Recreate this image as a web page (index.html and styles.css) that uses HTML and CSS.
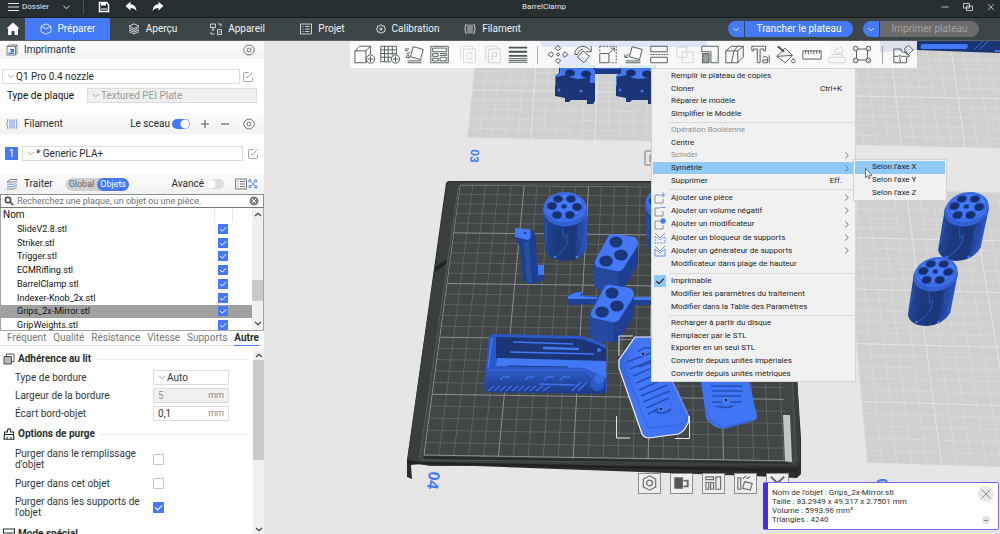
FILE: index.html
```html
<!DOCTYPE html>
<html lang="fr">
<head>
<meta charset="utf-8">
<title>BarrelClamp</title>
<link rel="stylesheet" href="styles.css">
</head>
<body>
<svg class="defs" aria-hidden="true">
  <symbol id="chev" viewBox="0 0 8 5"><path d="M1 1l3 2.6L7 1"/></symbol>
  <symbol id="gear" viewBox="0 0 12 12"><path d="M3.800 1.200h4.400L9 2.600l1.200.6L11.500 6l-1.300 2.800-1.200.6-.8 1.400H3.800L3 9.400l-1.200-.6L.5 6l1.300-2.800L3 2.600z"/><circle cx="6" cy="6" r="1.900"/></symbol>
  <symbol id="edit" viewBox="0 0 12 12"><path d="M6.500 1.500H3Q1.500 1.500 1.500 3v6Q1.500 10.500 3 10.500h6q1.500 0 1.500-1.500V6.500M5 7l5.500-5.500M5 7l.3-1.600"/></symbol>
  <symbol id="spool" viewBox="0 0 12 12"><path d="M2 1Q-.2 6 2 11M10 1q2.200 5 0 10"/><path class="tint" d="M4 1.500v9M6 1.500v9M8 1.500v9"/></symbol>
  <symbol id="tick" viewBox="0 0 10 10"><path d="M2 5l2.200 2.200L8.300 3"/></symbol>
</svg>

<header class="titlebar">
  <button class="file"><svg class="ic burger" viewBox="0 0 12 10"><path d="M0 1.500h11M0 5h11M0 8.500h11"/></svg>Dossier<svg class="ic file-chev"><use href="#chev"/></svg></button>
  <button class="tool" aria-label="Enregistrer"><svg class="ic s12" viewBox="0 0 12 12"><path class="bold" d="M1.500 1.500h7l2 2v7h-9z"/><path class="fill" d="M3 1h5v3.500H3zM3 7.500h6v1H3z"/></svg></button>
  <button class="tool" aria-label="Annuler"><svg class="ic s12" viewBox="0 0 12 12"><path class="fill" d="M.5 5L5.500.8v2.500q5.500.2 6 6.700-2-3-6-3v2.500z"/></svg></button>
  <button class="tool" aria-label="Rétablir"><svg class="ic s12" viewBox="0 0 12 12"><path class="fill" d="M11.500 5L6.500.8v2.500Q1 3.500.5 10q2-3 6-3v2.500z"/></svg></button>
  <h1>BarrelClamp</h1>
  <div class="window">
    <button aria-label="Réduire"><svg class="ic s10" viewBox="0 0 10 10"><path d="M1.500 5h7"/></svg></button>
    <button aria-label="Restaurer"><svg class="ic s10" viewBox="0 0 10 10"><path d="M.5 1.500h6v4.500h-6zM3.500 4h6v4.500h-6z"/></svg></button>
    <button aria-label="Fermer"><svg class="ic s10" viewBox="0 0 10 10"><path d="M2 2.200l6 6M8 2.200l-6 6"/></svg></button>
  </div>
</header>

<nav class="tabs">
  <button class="home" aria-label="Accueil"><svg class="ic s14" viewBox="0 0 14 14"><path class="fill" d="M7 .5L.5 6.500H2V13h3.500V9h3v4H12V6.500h1.500z"/></svg></button>
  <button class="tab active"><svg class="ic s12" viewBox="0 0 12 12"><path d="M6 .8l5 2.500v5.400l-5 2.500-5-2.500V3.300zM1 3.300l5 2.600 5-2.600"/></svg>Préparer</button>
  <button class="tab"><svg class="ic s12" viewBox="0 0 12 12"><path d="M6 .8l5 2.400-5 2.400-5-2.400zM1 5l5 2.400L11 5M1 6.800l5 2.400 5-2.400M1 8.600L6 11l5-2.400"/></svg>Aperçu</button>
  <button class="tab"><svg class="ic s12" viewBox="0 0 12 12"><path d="M.5 1h5v3.500h-5zM3 4.500V7M1.500 7h3M7.500 6.500h4v5h-4zM8.500 9h2M8 1h3v2.500M1 9v2h3.500"/></svg>Appareil</button>
  <button class="tab"><svg class="ic s12" viewBox="0 0 12 12"><path d="M.5 1h11v10H.5zM2.500 3.500h1M5 3.500h4.500M2.500 6h1M5 6h4.500M2.500 8.500h1M5 8.500h4.500"/></svg>Projet</button>
  <button class="tab"><svg class="ic s10" viewBox="0 0 12 12"><path class="mid" d="M6 .8l1.500 1.300 2.500.4.300 2.200L11.500 6l-1.200 1.500L10 9.600l-2.500.4L6 11.200 4.500 10 2 9.600l-.3-2.100L.5 6l1.200-1.300L2 2.500l2.500-.4zM6 4v4M4 6h4"/></svg>Calibration</button>
  <button class="tab"><svg class="ic s12"><use href="#spool"/></svg>Filament</button>
  <div class="slice">
    <button class="drop" aria-label="Options de tranchage"><svg class="ic c8"><use href="#chev"/></svg></button><button class="go">Trancher le plateau</button>
  </div>
  <div class="slice print">
    <button class="drop" aria-label="Options d’impression"><svg class="ic c8"><use href="#chev"/></svg></button><button class="go" disabled>Imprimer plateau</button>
  </div>
</nav>

<main>
<aside class="sidebar">
  <div class="head">
    <svg class="ic s12" viewBox="0 0 12 12"><path d="M1 2.500l2-1.500h8v8.500L9.500 11M1 2.500h8.500V11H1zM9.500 2.500L11 1"/><path class="tint-fill" d="M2.500 8.500h5.500V10H2.500zM4 5h4v3H5z"/></svg>
    <h2>Imprimante</h2>
    <button class="plain push" aria-label="Réglages imprimante"><svg class="ic s12"><use href="#gear"/></svg></button>
  </div>
  <div class="printer">
    <label class="pick"><svg class="ic c8"><use href="#chev"/></svg><select aria-label="Imprimante"><option>Q1 Pro 0.4 nozzle</option></select></label>
    <button class="plain" aria-label="Modifier l’imprimante"><svg class="ic s12 pale"><use href="#edit"/></svg></button>
  </div>
  <div class="plate-type">
    <label for="bed">Type de plaque</label>
    <div class="pick off"><svg class="ic c8"><use href="#chev"/></svg><select id="bed" disabled><option>Textured PEI Plate</option></select></div>
  </div>
  <div class="head tall">
    <svg class="ic s12 two"><use href="#spool"/></svg>
    <h2>Filament</h2>
    <label class="toggle push">Le sceau<input type="checkbox" class="switch" checked></label>
    <button class="plain" aria-label="Ajouter"><svg class="ic s10" viewBox="0 0 10 10"><path class="mid" d="M5 1v8M1 5h8"/></svg></button>
    <button class="plain minus" aria-label="Retirer"><svg class="ic s10" viewBox="0 0 10 10"><path class="mid" d="M1 5h8"/></svg></button>
    <button class="plain" aria-label="Réglages filament"><svg class="ic s12"><use href="#gear"/></svg></button>
  </div>
  <div class="filament">
    <span class="badge">1</span>
    <label class="pick"><svg class="ic c8"><use href="#chev"/></svg><select aria-label="Filament"><option>* Generic PLA+</option></select></label>
    <button class="plain" aria-label="Modifier le filament"><svg class="ic s12 pale"><use href="#edit"/></svg></button>
  </div>
  <div class="head tall process">
    <svg class="ic s12" viewBox="0 0 12 12"><path d="M1 4l3-2.500h7L8.500 4zM1 11h7.500L11 8.500"/><path class="tint" d="M1 6.200h7.500L11 4M1 8.600h7.500L11 6.200"/></svg>
    <h2>Traiter</h2>
    <div class="seg"><button>Global</button><button class="on">Objets</button></div>
    <label class="toggle push">Avancé<input type="checkbox" class="switch"></label>
    <button class="plain" aria-label="Liste"><svg class="ic s12" viewBox="0 0 12 12"><path d="M.5 1h11v10H.5zM2.500 3.500h1M5 3.500h5M2.500 6h1M5 6h5M2.500 8.500h1M5 8.500h5"/></svg></button>
    <button class="plain" aria-label="Paramètres"><svg class="ic s10" viewBox="0 0 10 10"><path class="tint" d="M3 3l4.500 4.500M7 3L3 7M.8.800h2v2h-2zM6.500 1h2.200v2H6.500zM1 6.500h2v2H1zM6.800 6.800H9V9H6.800z"/></svg></button>
  </div>
  <div class="search">
    <svg class="ic s10" viewBox="0 0 10 10"><g class="thick"><circle cx="4" cy="4" r="2.700"/><path d="M6 6l3.300 3.300"/></g></svg>
    <input type="text" aria-label="Recherche" placeholder="Recherchez une plaque, un objet ou une pièce.">
    <button class="plain" aria-label="Effacer"><svg class="clear" viewBox="0 0 10 10"><circle cx="5" cy="5" r="5"/><path d="M3 3l4 4M7 3L3 7"/></svg></button>
  </div>
  <div class="objects">
    <table>
      <thead><tr><th scope="col">Nom</th><th></th><th></th></tr></thead>
      <tbody>
        <tr><td><label for="o1">SlideV2.8.stl</label></td><td><input id="o1" type="checkbox" class="box" checked></td><td></td></tr>
        <tr><td><label for="o2">Striker.stl</label></td><td><input id="o2" type="checkbox" class="box" checked></td><td></td></tr>
        <tr><td><label for="o3">Trigger.stl</label></td><td><input id="o3" type="checkbox" class="box" checked></td><td></td></tr>
        <tr><td><label for="o4">ECMRifling.stl</label></td><td><input id="o4" type="checkbox" class="box" checked></td><td></td></tr>
        <tr><td><label for="o5">BarrelClamp.stl</label></td><td><input id="o5" type="checkbox" class="box" checked></td><td></td></tr>
        <tr><td><label for="o6">Indexer-Knob_2x.stl</label></td><td><input id="o6" type="checkbox" class="box" checked></td><td></td></tr>
        <tr class="sel"><td><label for="o7">Grips_2x-Mirror.stl</label></td><td><input id="o7" type="checkbox" class="box" checked></td><td></td></tr>
        <tr><td><label for="o8">GripWeights.stl</label></td><td><input id="o8" type="checkbox" class="box" checked></td><td></td></tr>
      </tbody>
    </table>
    <div class="bar list-bar"><svg class="ic c8 up"><use href="#chev"/></svg><i class="thumb"></i><svg class="ic c8"><use href="#chev"/></svg></div>
  </div>
  <div class="subtabs">
    <button>Fréquent</button><button>Qualité</button><button>Résistance</button><button>Vitesse</button><button>Supports</button><button class="on">Autre</button>
  </div>
  <div class="params">
    <div class="fields">
      <h3><svg class="ic s12" viewBox="0 0 12 12"><path class="greyfill" d="M1 3.500h7.500V11H1z"/><path d="M3.500 3.500V1H11v7.500H8.500"/></svg>Adhérence au lit</h3>
      <div class="row"><label for="brim">Type de bordure</label><div class="pick"><svg class="ic c8"><use href="#chev"/></svg><select id="brim"><option>Auto</option></select></div></div>
      <div class="row"><label for="bw">Largeur de la bordure</label><div class="num off"><input id="bw" type="text" value="5" disabled><span>mm</span></div></div>
      <div class="row"><label for="gap">Écart bord-objet</label><div class="num"><input id="gap" type="text" value="0,1"><span>mm</span></div></div>
      <h3><svg class="ic s12" viewBox="0 0 12 12"><path class="mid" d="M4.500 4V1.500Q6 .3 7.500 1.500V4h3v2.500h-9V4zM1.500 6.500L1 11.200h10l-.5-4.700M4 11V9M8 11V9"/></svg>Options de purge</h3>
      <div class="row two"><label for="p1">Purger dans le remplissage d'objet</label><input id="p1" type="checkbox" class="box big"></div>
      <div class="row mid-row"><label for="p2">Purger dans cet objet</label><input id="p2" type="checkbox" class="box big"></div>
      <div class="row two last"><label for="p3">Purger dans les supports de l'objet</label><input id="p3" type="checkbox" class="box big" checked></div>
      <h3><svg class="ic s12" viewBox="0 0 12 12"><path class="mid" d="M.5 1h11v4H.5zM.5 7h5v4h-5zM7.500 7h4M7.500 9h4M7.500 11h4"/></svg>Mode spécial</h3>
    </div>
    <div class="bar"><svg class="ic c8 up"><use href="#chev"/></svg><i class="thumb long"></i><svg class="ic c8"><use href="#chev"/></svg></div>
  </div>
</aside>

<section class="view">
  <svg class="scene" viewBox="264 41 736 493" preserveAspectRatio="xMinYMin slice" role="img" aria-label="Plateaux 3D">
    <defs>
      <linearGradient id="cyl"><stop offset="0" stop-color="#24489f"/><stop offset=".3" stop-color="#1c3980"/><stop offset=".7" stop-color="#1b3678"/><stop offset="1" stop-color="#2c59c8"/></linearGradient>
      <linearGradient id="front" x2="0" y2="1"><stop offset="0" stop-color="#2b5ac8"/><stop offset="1" stop-color="#1c3a85"/></linearGradient>
      <linearGradient id="grip" x2="1" y2="0"><stop offset="0" stop-color="#2f62dd"/><stop offset=".25" stop-color="#4378fb"/><stop offset="1" stop-color="#3d70f0"/></linearGradient>
      <g id="barrel">
        <path d="M-22 0L-20 42Q-15 53 1 53 17 52 22 40V0z" fill="url(#cyl)"/>
        <path d="M-19 14v22M-10 50q8-6 12-14V26M12 50q6-8 8-20M-3 20l2 10 3-2M14 18l-1 9 3 4" fill="none" stroke="#2d58bd"/>
        <circle cx="-10" cy="49" r="1.300" fill="#4479fc"/><circle cx="12" cy="49" r="1.300" fill="#4479fc"/>
        <ellipse cy="2" rx="22" ry="16.500" fill="#3261d2"/>
        <ellipse cy="-1" rx="21" ry="15" fill="#3e70f0"/>
        <ellipse cy="-2" rx="18.500" ry="12.500" fill="#467bff" stroke="#2c58c2" stroke-width=".7"/>
        <g fill="#182f68" stroke="#2c58c4"><ellipse cx="-7" cy="-9" rx="5" ry="3.600"/><ellipse cx="6" cy="-9" rx="5" ry="3.600"/><ellipse cx="-13" cy="-2" rx="5" ry="4"/><ellipse cx="12" cy="-1" rx="5" ry="4"/><ellipse cx="-8" cy="7" rx="5" ry="4"/><ellipse cx="5" cy="7" rx="5" ry="4"/><ellipse cx="-1" cy="-1.500" rx="2.700" ry="2.200"/></g>
      </g>
      <g id="block">
        <path d="M594 262V284Q596 290 604 291L620 291Q623 290 625 286L638 264V243z" fill="#1f3f92"/>
        <path d="M594 262V284Q596 290 604 291L618 291V270z" fill="#24499f"/>
        <path d="M609 235q3-2 6-1l19 3q4 2 4 7l-1 3-14 22q-3 3-7 2l-19-4q-3-2-2-6z" fill="#4378f8"/>
        <g fill="#1b3779"><ellipse cx="616" cy="242" rx="6.500" ry="5.500"/><ellipse cx="621" cy="255" rx="6.800" ry="5.500"/><ellipse cx="606" cy="261" rx="6.800" ry="5.500"/></g>
      </g>
      <g id="clamp">
        <path d="M555 76l4-3v-8h36v36l-2 3h-6v-4h-16l-2 2h-4v-4l-10-2z" fill="#1b3576"/>
        <path d="M560 65h32l3 6v12h-5v-8l-4 3-8 1-6-1-6-3-10 2v9h-1V76l5-3z" fill="#4277f6"/>
        <g fill="#182f68"><ellipse cx="570" cy="73" rx="5" ry="3.500"/><ellipse cx="586" cy="74" rx="5" ry="3.500"/></g>
        <circle cx="559" cy="90" r="1.500" fill="#4277f6"/><circle cx="581" cy="91" r="1.500" fill="#4277f6"/>
      </g>
      <clipPath id="bed-clip"><path d="M460 185L784 188 784 400 792 462 423 456z"/></clipPath>
    </defs>
    <g class="plate" data-quad="490,-80 775,-78 790,144 467,138"></g>
    <g class="plate" data-quad="820,-80 1105,-78 1160,152 838,145"></g>
    <g class="plate" data-quad="842,189 1167,195 1245,475 867,463"></g>

    <path d="M448 181H790l7 197 4 60v36l-4 4-44-2-333-12-9 1 1 14-5-2V460l14-99 25-178z" fill="#2b2d2d"/>
    <path d="M448 182H788l12 255v25l-4 4H430l-23-4 14-100 26-179z" fill="#3b3e3e"/>
    <path d="M447 263l-12 9v-5l11-7zM407 460l14 2 376 7v3L407 464z" fill="#202222"/>
    <path d="M464 184H784l12 274q0 5-4 5L424 460q-5-1-4-5l38-266q1-5 6-5z" fill="#424545" stroke="#5e6161" stroke-width=".8"/>
    <path d="M424 456L783 462l10 2-370-5z" fill="#2a2c2c"/>
    <g clip-path="url(#bed-clip)"><g class="plate dark" data-quad="460,185 783,188 799,461 424,455"></g></g>
    <path d="M783 415h7l2 47-7-1z" fill="#c4c5c5"/>

    <g class="plate-no"><text transform="translate(471 149) rotate(94)">03</text><text class="lg" transform="translate(429 471) rotate(97)">04</text><text class="lg" transform="translate(876 479) rotate(84)">05</text></g>
    <path d="M652 151h-6q-1 0-1 1v12q0 1 1 1h6M652 155h-2v7h2" fill="none" stroke="#777"/>

    <path d="M540 41H707v4l-4 2H542z" fill="#2b57c4"/><path d="M542 43H700" stroke="#4277f6"/>
    <path d="M560 56l9-2 14 2 9 9h-34z" fill="#3d6fe8"/>
    <path d="M595 68h36v6h-36z" fill="#1d3b84"/><path d="M595 67h40v2h-40z" fill="#3e70ea"/>
    <use href="#clamp"/><use href="#clamp" x="61"/>
    <path d="M880 41h120v12l-84-3-36 2z" fill="#1b3474"/><path d="M922 44h44q2 0 2 2t-2 3h-44q-3-2 0-5zM995 50h5v2h-5z" fill="#4277fa"/><path d="M974 50l9-9M979 50l9-9M884 50l30-2" stroke="#3c6bdc" fill="none"/>

    <use href="#barrel" x="565" y="208"/><use href="#barrel" x="667" y="203"/>
    <use href="#barrel" transform="translate(967 208) skewX(-12)"/>
    <use href="#barrel" transform="translate(936 273) skewX(-11)"/>

    <path d="M515 236l5 13 3 31q3 4 8 4l7-1-2-43-2-9z" fill="#1f4092"/><path d="M524 243l3 39 5 1-3-42z" fill="#27509f"/>
    <path d="M515 228l15 1 1 8-3 3-13-3zM538 265h6v10h-6z" fill="#4277f6"/><path d="M538 275h6l-1 6h-7z" fill="#1f4092"/><circle cx="525" cy="233" r="1" fill="#132654"/>
    <use href="#block"/>
    <path d="M568 295l4-1 5-2h7l-2 4 17 1v7l-31 1zM633 297h19v8h-19z" fill="#1f4296"/><path d="M568 296q5-4 15-4l-3 4 17 1v2h-29zM633 297h19v3h-19z" fill="#4277f6"/>
    <use href="#block" x="-4" y="51"/>

    <path d="M489 337q2-3 6-3l87 2 18 6 6 3 1 46-2 3-117-2q-4-1-4-6z" fill="#2b58c8"/>
    <path d="M496 337l86 2 16 6 8 4v14l-110-4z" fill="#1b3577"/>
    <path d="M497 358l109 3v17l-22-10-88-2z" fill="#4277f6"/>
    <path d="M492 338l-4 30" stroke="#4277f6" stroke-width="1.500"/>
    <path d="M513 342l60 2M510 352l84 2" stroke="#4277f6" stroke-width="1.500"/><path d="M508 366l60 1" stroke="#1b3577"/><path d="M543 348l36 1" stroke="#4277f6" stroke-width="2.500"/>
    <path d="M486 370l99-1 8 9 13 2v12l-1 2-117-2-4-4z" fill="url(#front)"/>
    <path d="M488 370h97l9 10" stroke="#3868dc" fill="none"/>
    <path d="M500 380l3-3h7M525 380l3-3h7M544 380l3-3h7M560 380l3-3h7M488 391l6-5M494 391l6-5M500 391l6-5M506 391l6-5M512 391l6-5M518 391l6-5M524 391l6-5M530 391l6-5M536 391l7-5M543 391l7-5M572 391l9-9M578 391l9-9M539 384l36 1" stroke="#3f72ec" stroke-width="1.300" fill="none"/>
    <circle cx="597" cy="384" r="7" fill="#2b59ca"/><circle cx="599" cy="379" r="5" fill="#3a6ae0"/><circle cx="599" cy="350" r="2" fill="#4277f6"/>

    <path d="M635 337h24v43l13 0 16 35q2 6-1 10-3 7-9 9l-29 4q-5 0-7-4l-23-66v-8z" fill="url(#grip)" stroke="#f3f5fc" stroke-width="1.200"/>
    <path d="M672 380l16 35q0 6-8 10l-32 3-26-66" fill="none" stroke="#3666dc"/>
    <path d="M638 352q6-6 14-4M638 367l15-5M627 362l24-9M630 369l23-9M633 376l24-10M636 383l24-10M639 390l25-11M641 396l26-11M643 402l27-11M646 408l23-10M648 414l12-6M655 411q8 5 16-2" stroke="#2450b4" stroke-width="1.700" fill="none"/>
    <g fill="#122a66" stroke="#8faef8" stroke-width=".7"><circle cx="643" cy="354" r="2"/><circle cx="661" cy="409" r="2"/></g>
    <path d="M616.500 416v22H630M675 438.500h14.500V416M619 356v-20h14" fill="none" stroke="#e8e8e8"/>
    <path d="M701 380h48l8 36q0 4-4 5l-29 8q-12-1-18-11z" fill="#4075f6"/><path d="M705 408l6 13 13 7 28-8" stroke="#2f60d4" fill="none"/>
    <path d="M711 381h30M711 386h31M712 391h31M712 396h30M712 402h10M730 402h12M716 406q10 3 17 0" stroke="#2450b4" stroke-width="1.500" fill="none"/><circle cx="726" cy="400" r="2" fill="#122a66" stroke="#8faef8" stroke-width=".7"/>
  </svg>

  <div class="toolbar">
    <div class="grp">
      <button aria-label="Ajouter"><svg viewBox="0 0 24 20"><path d="M1 6h12v13H1zM1 6l5-5h12l-5 5M18 1v9M13 19l2-2"/><circle cx="18" cy="15" r="4.500"/><path d="M18 12v6M15 15h6"/></svg></button>
      <button aria-label="Ajouter un plateau"><svg viewBox="0 0 24 20"><path d="M2 1h17v9M2 1v17h11M2 5h17M2 9h17M2 13h12M6 1v17M10 1v17M14.500 1v10"/><circle cx="18" cy="15" r="4.500"/><path d="M18 12v6M15 15h6"/></svg></button>
      <button aria-label="Orienter"><svg viewBox="0 0 24 20"><path d="M10 1.500l11 3-3 11-11-3zM4 17h15M4 19h15M2 10l5-3M1 4h5M2 13l4 1-1-4zM1 6h3"/></svg></button>
      <button aria-label="Arranger"><svg viewBox="0 0 24 20"><path d="M2 1h19v18H2zM4 3h15v4H4zM4 9h6v3H4zM4 14h6v3H4zM12 9h7v2h-7M12 13h7v4h-7z"/></svg></button>
    </div>
    <div class="grp faint">
      <button disabled aria-label="Objets"><svg viewBox="0 0 24 20"><path d="M7 4h13v15H7zM4 16V1h13v3M11 8h5v7h-5z"/></svg></button>
      <button disabled aria-label="Pièces"><svg viewBox="0 0 24 20"><path d="M7 4h13v15H7zM4 16V1h13v3M11 16V8h5v4h-5"/></svg></button>
    </div>
    <div class="grp"><button aria-label="Couches"><svg viewBox="0 0 24 20"><path class="hv" d="M2 2.500h20M2 7h20M2 11.500h20"/><path d="M2 14.500h20M2 16.500h20M2 18.500h20"/></svg></button></div>
    <i class="sep"></i>
    <div class="grp wide">
      <button aria-label="Déplacer"><svg viewBox="0 0 24 20"><path d="M12 0l3 3.500-3 2-3-2zM12 20l3-3.500-3-2-3 2zM1 10l4-3 2 3-2 3zM23 10l-4-3-2 3 2 3z"/><circle cx="12" cy="10" r="1.500"/></svg></button>
      <button aria-label="Pivoter"><svg viewBox="0 0 24 20"><path d="M12 6l7 6-6 7-7-6zM3 10q0-8 9-9 5 0 8 5M21 1v6h-6M3 10h3q1-5 6-6"/></svg></button>
      <button aria-label="Échelle"><svg viewBox="0 0 24 20"><path stroke-dasharray="2 1.500" d="M3 1h18v18h-7M3 1v7"/><path d="M3 9h10v10H3zM13 9l6-6M15 3h4v4"/></svg></button>
      <button aria-label="Poser"><svg viewBox="0 0 24 20"><path d="M10 1.500l11 3-3 11-11-3zM3 17h16M3 19h16M2 13l5-4M2 10v3h4"/></svg></button>
      <button aria-label="Couper"><svg viewBox="0 0 24 20"><path d="M3 7V1h18v6zM3 13v6h18v-6z"/><path stroke-dasharray="2 1" d="M2 10h20"/></svg></button>
      <button class="faint" disabled aria-label="Booléen"><svg viewBox="0 0 24 20"><path d="M3 2h11v11H3zM9 7h12v12H9z"/></svg></button>
      <button aria-label="Supports"><svg viewBox="0 0 24 20"><path d="M3 7V1h18v18h-8V7z"/><path class="dots" d="M4 9h7v10H4z"/></svg></button>
      <button aria-label="Couture"><svg viewBox="0 0 24 20"><path d="M2 6h13v13H2zM2 6l6-5h13l-6 5M21 1v12l-6 6M11 6L8 19M11 6l4-5"/></svg></button>
      <button aria-label="Texte"><svg viewBox="0 0 24 20"><path d="M2 1h15v5h-2V4h-4v15H8V4H4v2H2zM14 13q4-2 5 1v5h-5v-3h5M21 11v8"/></svg></button>
      <button aria-label="Couleur"><svg viewBox="0 0 24 20"><path d="M2 12l9-9 8 8-8 8zM2 12l17-1M20 14q-4 5 0 5t0-5"/><path class="hv" d="M3 1l7 6"/></svg></button>
      <button aria-label="Mesurer"><svg viewBox="0 0 24 20"><path d="M2 6h20v9H2zM5 6v3M8 6v4M11 6v3M14 6v4M17 6v3M20 6v3"/></svg></button>
      <button class="faint" disabled aria-label="Assembler"><svg viewBox="0 0 24 20"><path d="M3 13h18v6H3zM6 10h12v3M9 5l8-3 2 5-8 2z"/></svg></button>
      <button aria-label="Ajuster"><svg viewBox="0 0 24 20"><path d="M6 4h12v12H6z"/><g class="wht"><circle cx="5" cy="3.500" r="2.500"/><circle cx="19" cy="3.500" r="2.500"/><circle cx="5" cy="16.500" r="2.500"/><circle cx="19" cy="16.500" r="2.500"/></g></svg></button>
    </div>
    <i class="sep"></i>
    <div class="grp"><button aria-label="Vue assemblage"><svg viewBox="0 0 24 20"><path d="M2 4h8q-1 3 1 3t2 1l3-1v3q3 0 3 2l-3 1v6H2zM2 12h5q1-3 3 0h6M9 12q-2 2 0 3v4M14 3l4-3 5 5-5 5-2-2q-3 0-2-2z"/></svg></button></div>
  </div>

  <div class="plate-tools">
    <button aria-label="Paramètres du plateau"><svg viewBox="0 0 22 21"><path d="M11 3l6.500 3.500v8L11 18l-6.500-3.500v-8z"/><circle cx="11" cy="10.500" r="3"/></svg></button>
    <button aria-label="Verrouiller"><svg viewBox="0 0 22 21"><path class="solid" d="M4 5h8v11H4z"/><path d="M13 8h4.500v6H13" stroke-width="2"/></svg></button>
    <button aria-label="Arranger le plateau"><svg viewBox="0 0 22 21"><path d="M3 4h8v3H3zM3 10h3v7H3zM8 10h3v7H8zM13.500 4h5v13h-5z"/></svg></button>
    <button aria-label="Orienter le plateau"><svg viewBox="0 0 22 21"><path d="M3 5h3v12H3zM10 9l8 2-2 7-8-2zM8 6l4-3M12 6l4-2"/></svg></button>
    <button aria-label="Supprimer le plateau"><svg viewBox="0 0 22 21"><path d="M4 4l14 13M18 4L4 17" stroke-width="2"/></svg></button>
  </div>

  <div class="menu" role="menu">
    <div class="mgroup n4">
      <button role="menuitem">Remplir le plateau de copies</button>
      <button role="menuitem">Cloner<kbd>Ctrl+K</kbd></button>
      <button role="menuitem">Réparer le modèle</button>
      <button role="menuitem">Simplifier le Modèle</button>
    </div>
    <div class="mgroup n5">
      <button role="menuitem" disabled>Opération Booléenne</button>
      <button role="menuitem">Centre</button>
      <button role="menuitem" disabled class="more">Scinder<svg class="ic arrow"><use href="#chev"/></svg></button>
      <button role="menuitem" class="more hot">Symétrie<svg class="ic arrow"><use href="#chev"/></svg></button>
      <button role="menuitem">Supprimer<kbd>Eff.</kbd></button>
    </div>
    <div class="mgroup n6">
      <button role="menuitem" class="more"><svg class="ic mi" viewBox="0 0 12 12"><path d="M6 3H1v8h8V7"/><path class="tint" d="M6.500 3h5M9 .5v5"/></svg>Ajouter une pièce<svg class="ic arrow"><use href="#chev"/></svg></button>
      <button role="menuitem" class="more"><svg class="ic mi" viewBox="0 0 12 12"><path d="M6 3H1v8h8V6"/><path class="tint" d="M6.500 2.500h5"/></svg>Ajouter un volume négatif<svg class="ic arrow"><use href="#chev"/></svg></button>
      <button role="menuitem" class="more"><svg class="ic mi" viewBox="0 0 12 12"><path d="M6 3H1v8h8V7"/><circle class="tint-fill" cx="9" cy="3" r="2.700"/></svg>Ajouter un modificateur<svg class="ic arrow"><use href="#chev"/></svg></button>
      <button role="menuitem" class="more"><svg class="ic mi" viewBox="0 0 12 12"><path d="M1 1l5 5 5-5"/><path class="tint" stroke-dasharray="2 1" d="M1 4v7h10V4M1 4l5 4 5-4"/></svg>Ajouter un bloqueur de supports<svg class="ic arrow"><use href="#chev"/></svg></button>
      <button role="menuitem" class="more"><svg class="ic mi" viewBox="0 0 12 12"><path d="M1 1l5 5 5-5"/><path class="tint" d="M1 4v7h10V4M1 4l5 4 5-4"/></svg>Ajouter un générateur de supports<svg class="ic arrow"><use href="#chev"/></svg></button>
      <button role="menuitem">Modificateur dans plage de hauteur</button>
    </div>
    <div class="mgroup n3">
      <button role="menuitemcheckbox" aria-checked="true"><svg class="ic mi on"><use href="#tick"/></svg>Imprimable</button>
      <button role="menuitem">Modifier les paramètres du traitement</button>
      <button role="menuitem">Modifier dans la Table des Paramètres</button>
    </div>
    <div class="mgroup n5">
      <button role="menuitem">Recharger à partir du disque</button>
      <button role="menuitem">Remplacer par le STL</button>
      <button role="menuitem">Exporter en un seul STL</button>
      <button role="menuitem">Convertir depuis unités impériales</button>
      <button role="menuitem">Convertir depuis unités métriques</button>
    </div>
  </div>
  <div class="menu sub" role="menu">
    <div class="mgroup n3">
      <button role="menuitem" class="hot">Selon l'axe X</button>
      <button role="menuitem">Selon l'axe Y</button>
      <button role="menuitem">Selon l'axe Z</button>
    </div>
  </div>
  <svg class="cursor" viewBox="0 0 8 12"><path d="M.5.5v9l2-1.800 1.300 3 1.500-.7L4 7.200h3z"/></svg>

  <div class="info" role="status">
    <div class="lines"><p>Nom de l'objet : Grips_2x-Mirror.stl</p><p>Taille : 83.2949 x 49.317 x 2.7501 mm</p><p>Volume : 5993.96 mm³</p><p>Triangles : 4240</p></div>
    <div class="acts">
      <button class="round" aria-label="Fermer"><svg class="ic s12" viewBox="0 0 12 12"><path d="M1.500 1.500l9 9M10.500 1.500l-9 9"/></svg></button>
      <button class="mini" aria-label="Réduire"><svg class="ic c8" viewBox="0 0 8 5"><path d="M2 2.500h4"/></svg></button>
    </div>
  </div>
</section>
</main>
<script src="scene.js"></script>
</body>
</html>
```
FILE: styles.css
```css
* { box-sizing: border-box; }
body { margin: 0; height: 100vh; display: flex; flex-direction: column; overflow: hidden; font: 10px/12px Roboto, "Noto Sans", sans-serif; color: #262e30; background: #e6e6e6; }
button, input, select { font: inherit; color: inherit; margin: 0; padding: 0; border: 0; background: none; }
button { display: flex; align-items: center; }
h1, h2, h3, p { margin: 0; font: inherit; }
.defs { position: absolute; width: 0; height: 0; }
.ic { fill: none; stroke: currentColor; stroke-width: .8; flex: none; display: block; }
.ic .fill { fill: currentColor; stroke: none; }
.ic .bold { stroke-width: 1.5; }
.ic .mid { stroke-width: 1.1; }
.ic .thick { stroke-width: 1.5; }
.ic .tint, .two { stroke: #4479fb; }
.ic .tint-fill { fill: #4479fb; stroke: none; }
.ic .greyfill { fill: #b4b8b8; }
.s10 { width: 10px; height: 10px; }
.s12 { width: 12px; height: 12px; }
.s14 { width: 14px; height: 14px; }
.c8 { width: 8px; height: 5px; }
.up { transform: rotate(180deg); }

.titlebar { flex: none; height: 18px; padding-bottom: 3px; display: flex; align-items: center; position: relative; background: #262e30; border-bottom: 1px solid #161c1e; color: #e3e6e6; font-size: 8px; }
.titlebar h1 { position: absolute; left: 0; right: 0; text-align: center; margin-left: 88px; pointer-events: none; }
.file { height: 14px; padding-left: 8px; width: 84px; border-right: 1px solid #4a5254; }
.burger { width: 12px; height: 10px; margin-right: 2px; stroke-width: 1.2; }
.file-chev { width: 9px; height: 5px; margin-left: auto; margin-right: 12px; stroke-width: 1; }
.tool { margin-left: 15px; color: #fff; }
.file + .tool { margin-left: 14px; }
.window { margin-left: auto; display: flex; gap: 13px; padding-right: 4px; }

.tabs { flex: none; height: 23px; display: flex; align-items: center; background: #3b4446; color: #f2f4f4; border-bottom: 1px solid #5a6264; }
.home { width: 25px; height: 22px; justify-content: center; color: #fff; }
.tab { width: 85px; height: 22px; justify-content: center; gap: 6px; }
.tab.active { background: #4479fb; color: #fff; }
.slice { display: flex; gap: 1px; width: 125px; margin-left: auto; margin-right: 10px; }
.slice button { height: 16px; justify-content: center; background: #4479fb; color: #fff; }
.slice .drop { width: 16px; border-radius: 8px 0 0 8px; }
.slice .go { flex: 1; border-radius: 0 8px 8px 0; }
.slice.print { width: 116px; margin-left: 0; margin-right: 21px; }
.slice.print .go { background: #6b6b6b; color: #a3a3a3; }

main { flex: 1; min-height: 0; display: flex; }
.sidebar { width: 264px; flex: none; display: flex; flex-direction: column; background: #fff; }
.plain { flex: none; justify-content: center; color: #555c5e; }
.pale { color: #8b9192; }
.push { margin-left: auto; }
.head { flex: none; height: 18px; display: flex; align-items: center; padding: 0 9px 0 6px; background: linear-gradient(#fbfbfb, #f2f2f2); }
.head > .ic { color: #5a6163; margin-right: 6px; }
.head.tall { height: 20px; }
.pick { display: flex; align-items: center; gap: 1px; height: 15px; padding-left: 4px; border: 1px solid #dcdcdc; background: #fff; flex: 1; min-width: 0; }
.pick .ic { color: #999; }
.pick select { appearance: none; flex: 1; min-width: 0; opacity: 1; }
.off { background: #f0f0f0 !important; color: #9a9a9a; }
.printer { display: flex; align-items: center; gap: 2px; padding: 10px 10px 0 2px; }
.printer .plain { width: 12px; margin-left: 0; }
.plate-type { display: flex; align-items: center; padding: 4px 7px 11px; }
.plate-type label { width: 80px; color: #111; }
.toggle { display: flex; align-items: center; gap: 2px; }
.switch { appearance: none; width: 18px; height: 10px; border-radius: 5px; background: radial-gradient(circle at 5px 5px, #fff 4px, #dedede 5px); }
.switch:checked { background: radial-gradient(circle at 13px 5px, #fff 4px, #4479fb 5px); }
.head .toggle + .plain { margin-left: 10px; }
.minus { margin: 0 13px 0 10px; }
.filament { display: flex; align-items: center; padding: 12px 5px 13px; }
.badge { width: 13px; height: 13px; text-align: center; line-height: 13px; background: #4479fb; color: #fff; margin-right: 4px; }
.filament .plain { margin-left: 4px; }
.process { padding-right: 6px; }
.seg { display: flex; margin-left: 13px; height: 13px; border-radius: 7px; background: #cfcfcf; font-size: 9px; color: #666; }
.seg button { padding: 0 3px; }
.seg .on { border-radius: 7px; background: #4479fb; color: #fff; }
.process .plain + .plain { margin-left: 1px; color: #7d9ff5; }
.head.process .toggle + .plain { margin-left: 11px; }
.search { flex: none; height: 14px; display: flex; align-items: center; padding: 0 4px 0 3px; gap: 3px; border: 1px solid #8b8f90; border-bottom-color: #777; font-size: 9px; }
.search input { flex: 1; min-width: 0; height: 12px; }
.search input::placeholder { color: #6e7475; }
.search .ic { color: #444; }
.clear { width: 10px; height: 10px; fill: #7d7d7d; stroke: #fff; display: block; }
.objects { flex: none; height: 123px; display: flex; overflow: hidden; border: 1px solid #a5a5a5; border-top: 0; color: #111; }
table { flex: 1; height: 124px; border-collapse: collapse; table-layout: fixed; font-size: 9px; line-height: 12px; }
th { text-align: left; font-weight: 400; font-size: 10px; padding: 0 2px; height: 14px; }
th + th { width: 18px; border-left: 1px solid #e8e8e8; }
th:last-child { width: 20px; }
td { padding: 0 0 0 16px; white-space: nowrap; }
td + td { padding: 0 0 0 4px; }
.sel { background: #a0a0a0; }
.box { appearance: none; display: block; width: 10px; height: 10px; background: #fff; border: 1px solid #c4c4c4; }
.box:checked { border: 0; background: #4479fb url("data:image/svg+xml,%3Csvg xmlns='http://www.w3.org/2000/svg' viewBox='0 0 10 10'%3E%3Cpath d='M2 5l2.200 2.200L8.300 3' fill='none' stroke='white'/%3E%3C/svg%3E") center / 100% no-repeat; }
.big { width: 11px; height: 11px; border-radius: 1px; }
.bar { flex: none; width: 11px; display: flex; flex-direction: column; align-items: center; justify-content: space-between; padding: 4px 0; background: #f0f0f0; color: #444; }
.bar .ic { stroke-width: 1.2; }
.thumb { width: 11px; height: 21px; background: #c9c9c9; margin-top: 43px; }
.subtabs { flex: none; height: 15px; display: flex; justify-content: space-between; align-items: stretch; padding: 0 5px 0 7px; color: #747879; border-bottom: 1px solid #e3e3e3; }
.subtabs .on { font-weight: 700; color: #262e30; box-shadow: 0 1px #4479fb; }
.params { flex: 1; min-height: 0; display: flex; overflow: hidden; padding-top: 3px; }
.params .bar { padding: 4px 0 2px; }
.thumb.long { height: 100px; margin: 2px 0 auto; }
.fields { flex: 1; min-width: 0; padding: 3px 4px 0 3px; overflow: hidden; }
h3 { display: flex; align-items: center; gap: 3px; height: 14px; font-weight: 700; font-size: 10px; }
h3::after { content: ""; flex: 1; height: 1px; margin-left: 2px; background: #ececec; }
.row { display: flex; align-items: center; height: 18px; padding-left: 12px; color: #30383a; line-height: 11px; }
h3 + .row { margin-top: 2px; }
.row label { width: 138px; padding-right: 12px; }
.row .pick, .num { flex: none; width: 76px; }
.num { display: flex; align-items: center; height: 15px; border: 1px solid #dcdcdc; padding: 0 4px; }
.num input { flex: 1; min-width: 0; }
.num span { color: #8a8a8a; font-size: 9px; }
.row + h3 { margin-top: 5px; }
.row.two { height: 26px; }
h3 + .row.two { margin-top: 5px; }
.mid-row { margin-top: 2px; }
.last { margin-top: 2px; }
.last + h3 { margin-top: 7px; }

.view { flex: 1; min-width: 0; position: relative; overflow: hidden; background: #e6e6e6; }
.scene { position: absolute; width: 100%; height: 100%; display: block; }
.bed { fill: #d0d0d0; }
.ln { stroke: #dbdbdb; stroke-width: .8; }
.ln.b { stroke: #e3e3e3; stroke-width: 1.1; }
.dark .bed { fill: none; }
.dark .ln { stroke: #6c6f6f; stroke-width: .7; }
.dark .ln.b { stroke: #8d9090; stroke-width: 1; }
.plate-no { fill: #4479fb; font: 700 12px "Liberation Sans", sans-serif; }
.plate-no .lg { font-size: 16px; }
.toolbar { position: absolute; left: 86px; right: 83px; top: 0; height: 27px; padding: 0 2px; display: flex; align-items: center; background: rgba(255, 255, 255, .85); }
.grp { display: flex; }
.grp.faint { margin-left: 3px; }
.grp.wide { flex: 1; justify-content: space-between; }
.toolbar button { width: 25px; height: 24px; justify-content: center; }
.toolbar svg { width: 22px; height: 19px; fill: none; stroke: #4d5456; stroke-width: 1; }
.toolbar .faint { opacity: .22; }
.toolbar .hv { stroke-width: 2; }
.dots { fill: #9a9e9f; }
.wht { fill: #dfe0e0; }
.sep { width: 1px; height: 18px; margin: 0 7px; background: #a9a9a9; }
.plate-tools { position: absolute; left: 374px; top: 432px; display: flex; gap: 9px; }
.plate-tools button { width: 23px; height: 21px; border: 1px solid #8c8c8c; background: #efefef; }
.plate-tools svg { width: 100%; fill: none; stroke: #6a6a6a; stroke-width: 1.2; }
.solid { fill: #555; }

.menu { position: absolute; left: 387px; top: 27px; width: 205px; padding: 1px; border: 1px solid #d3d3d3; background: #f1f1f1; font: 8px/12px Roboto, "Noto Sans", sans-serif; color: #1e1e1e; display: flex; flex-direction: column; gap: 4px; }
.mgroup { display: grid; grid-auto-rows: 1fr; position: relative; }
.mgroup + .mgroup::before { content: ""; position: absolute; left: 16px; right: 0; top: -2px; height: 1px; background: #d9d9d9; }
.mgroup button { padding-left: 18px; padding-right: 12px; white-space: nowrap; min-height: 0; position: relative; }
.mgroup .mi { width: 12px; height: 12px; margin-left: -17px; margin-right: 5px; color: #777; }
.mgroup .more { padding-right: 3px; }
.mgroup button:disabled { color: #929292; }
.mi.on { background: #91c9f7; color: #222 !important; stroke-width: 1; }
.hot { background: #91c9f7; }
.n3 { height: 38px; }
.n4 { height: 50px; }
.n5 { height: 63px; }
.n6 { height: 80px; }
kbd { font: inherit; margin-left: auto; }
.arrow { width: 8px; height: 5px; margin-left: auto; transform: rotate(-90deg); color: #555; }
.sub { left: 589px; top: 118px; width: 94px; }
.sub .mgroup button { padding-left: 17px; }
.cursor { position: absolute; left: 601px; top: 127px; width: 8px; height: 12px; fill: #fff; stroke: #333; stroke-width: .7; }

.info { position: absolute; right: 1px; bottom: 4px; width: 236px; height: 48px; display: flex; justify-content: space-between; padding: 5px 4px; border: 1px solid #7c67ea; border-left: 5px solid #4a2ae6; border-radius: 2px; background: #fff; font-size: 8px; line-height: 9px; color: #333; }
.acts { display: flex; flex-direction: column; justify-content: space-between; align-items: center; }
.round { width: 16px; height: 16px; border-radius: 8px; justify-content: center; background: #e9e9e9; color: #777; margin-top: -2px; }
.mini { width: 8px; height: 8px; border-radius: 4px; background: #e2e2e2; color: #777; }
```
FILE: scene.js
```js
// Draws each build plate's grid: 25 x 25 cells projected into the quad given in data-quad.
const NS = "http://www.w3.org/2000/svg";
function projector(q) {
  const [[x0, y0], [x1, y1], [x2, y2], [x3, y3]] = q;
  const sx = x0 - x1 + x2 - x3, sy = y0 - y1 + y2 - y3;
  const dx1 = x1 - x2, dx2 = x3 - x2, dy1 = y1 - y2, dy2 = y3 - y2;
  const det = dx1 * dy2 - dx2 * dy1;
  const g = (sx * dy2 - dx2 * sy) / det, h = (dx1 * sy - sx * dy1) / det;
  return (u, v) => {
    const w = g * u + h * v + 1;
    return [((x1 - x0 + g * x1) * u + (x3 - x0 + h * x3) * v + x0) / w,
            ((y1 - y0 + g * y1) * u + (y3 - y0 + h * y3) * v + y0) / w];
  };
}
document.querySelectorAll(".plate").forEach(plate => {
  const quad = plate.dataset.quad.split(" ").map(p => p.split(",").map(Number));
  const at = projector(quad);
  const bed = document.createElementNS(NS, "polygon");
  bed.setAttribute("points", plate.dataset.quad);
  bed.setAttribute("class", "bed");
  plate.append(bed);
  for (const major of [false, true]) {
    for (let i = 0; i <= 25; i++) {
      if ((i % 5 === 0) !== major) continue;
      const t = i / 25;
      for (const [a, b] of [[at(t, 0), at(t, 1)], [at(0, t), at(1, t)]]) {
        const line = document.createElementNS(NS, "path");
        line.setAttribute("d", `M${a}L${b}`);
        line.setAttribute("class", major ? "ln b" : "ln");
        plate.append(line);
      }
    }
  }
});
```
